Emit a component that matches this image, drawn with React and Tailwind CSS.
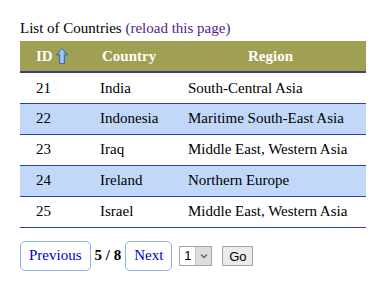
const ROWS = [
  { id: 21, country: "India", region: "South-Central Asia" },
  { id: 22, country: "Indonesia", region: "Maritime South-East Asia" },
  { id: 23, country: "Iraq", region: "Middle East, Western Asia" },
  { id: 24, country: "Ireland", region: "Northern Europe" },
  { id: 25, country: "Israel", region: "Middle East, Western Asia" },
];

function SortArrow() {
  return (
    <svg width="12" height="16" viewBox="0 0 12 16" className="inline-block align-[-3px]">
      <defs>
        <linearGradient id="arr" x1="0" y1="0" x2="1" y2="0">
          <stop offset="0" stopColor="#3a7fd8" />
          <stop offset="0.5" stopColor="#a8d0ff" />
          <stop offset="1" stopColor="#2f6cc8" />
        </linearGradient>
      </defs>
      <path d="M6 0.5 L11.5 7 L8.5 7 L8.5 15.5 L3.5 15.5 L3.5 7 L0.5 7 Z" fill="url(#arr)" stroke="#2b5fb0" strokeWidth="0.8" />
    </svg>
  );
}

export default function App() {
  return (
    <div className="min-h-screen bg-white px-5 pt-[18px] font-['Liberation_Serif',serif] text-[15px] text-black">
      <p className="leading-[20px]">
        List of Countries <span className="text-[#551a8b]">(reload this page)</span>
      </p>
      <table className="mt-[3px] w-[346px] border-collapse">
        <thead>
          <tr className="h-[31px] border-b-2 border-[#3a4080] bg-[#a0a055] font-bold text-white">
            <th className="w-[65px] pl-4 text-left">
              ID <SortArrow />
            </th>
            <th className="w-[90px] pl-[17px] text-left">Country</th>
            <th className="text-center">Region</th>
          </tr>
        </thead>
        <tbody>
          {ROWS.map((row, i) => (
            <tr
              key={row.id}
              className={`h-[31px] border-b border-[#2b3fb0] ${i % 2 ? "bg-[#c2d8f8]" : "bg-white"}`}
            >
              <td className="pl-4">{row.id}</td>
              <td className="pl-[15px]">{row.country}</td>
              <td className="pl-[13px]">{row.region}</td>
            </tr>
          ))}
        </tbody>
      </table>
      <div className="mt-[13px] flex items-center">
        <button className="h-[30px] rounded-[5px] border border-[#8fb3e0] px-2 text-[#0000cc]">Previous</button>
        <span className="mx-1 font-bold">5 / 8</span>
        <button className="h-[30px] rounded-[5px] border border-[#8fb3e0] px-2 text-[#0000cc]">Next</button>
        <div className="ml-[7px] flex h-[20px] items-stretch border border-[#a5a5a5] bg-white font-['Liberation_Sans',sans-serif] text-[13px]">
          <span className="flex w-[15px] items-center justify-center">1</span>
          <span className="flex w-[16px] items-center justify-center border-l border-[#c8c8c8] bg-[#dcdcdc]">
            <svg width="8" height="6" viewBox="0 0 8 6">
              <path d="M1 1.5 L4 4.5 L7 1.5" fill="none" stroke="#666" strokeWidth="1.5" />
            </svg>
          </span>
        </div>
        <button className="ml-[10px] h-[20px] w-[31px] border border-[#a5a5a5] bg-[#ececec] font-['Liberation_Sans',sans-serif] text-[13px]">
          Go
        </button>
      </div>
    </div>
  );
}
